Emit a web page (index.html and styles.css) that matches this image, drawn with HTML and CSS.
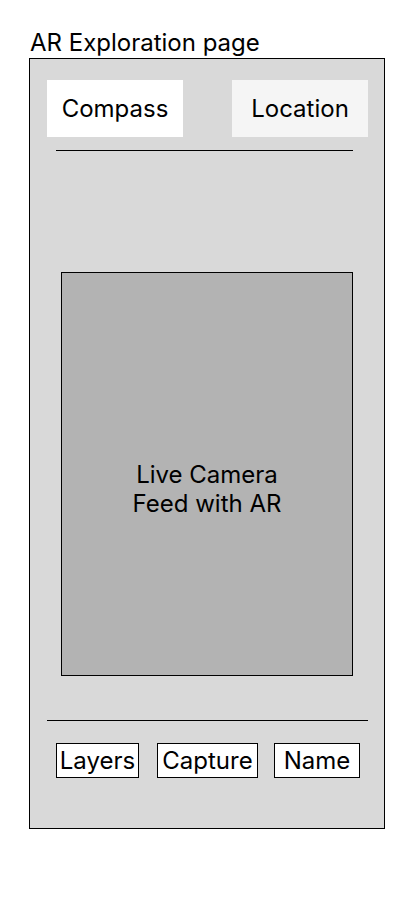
FILE: index.html
```html
<!DOCTYPE html>
<html>
<head>
<meta charset="utf-8">
<link rel="stylesheet" href="styles.css">
</head>
<body>
<div class="title">AR Exploration page</div>
<div class="frame">
  <div class="top-row">
    <div class="top-btn compass">Compass</div>
    <div class="top-btn location">Location</div>
  </div>
  <div class="line top-line"></div>
  <div class="camera">Live Camera<br>Feed with AR</div>
  <div class="line bottom-line"></div>
  <div class="bottom-row">
    <div class="bbtn layers">Layers</div>
    <div class="bbtn capture">Capture</div>
    <div class="bbtn name">Name</div>
  </div>
</div>
</body>
</html>
```
FILE: styles.css
```css
* { box-sizing: border-box; }
body {
  margin: 0;
  background: #fff;
  font-family: Inter, "Noto Sans", sans-serif;
  color: #000;
}
.title {
  font-size: 24px;
  line-height: 29px;
  padding: 28px 0 0 30px;
  height: 58px;
}
.frame {
  margin-left: 29px;
  width: 356px;
  height: 771px;
  border: 1px solid #000;
  background: #d9d9d9;
  padding: 21px 16px 0 17px;
}
.top-row {
  display: flex;
  justify-content: space-between;
}
.top-btn {
  width: 136px;
  height: 57px;
  display: flex;
  align-items: center;
  justify-content: center;
  font-size: 24px;
}
.compass { background: #fff; }
.location { background: #f5f5f5; }
.line {
  height: 1px;
  background: #000;
}
.top-line {
  margin: 13px 0 0 9px;
  width: 297px;
}
.camera {
  margin: 121px 0 0 14px;
  width: 292px;
  height: 404px;
  border: 1px solid #000;
  background: #b3b3b3;
  display: flex;
  align-items: center;
  justify-content: center;
  text-align: center;
  font-size: 24px;
  line-height: 29px;
  padding-top: 30px;
}
.bottom-line {
  margin: 44px 0 0 0;
  width: 321px;
}
.bottom-row {
  display: flex;
  margin: 22px 0 0 9px;
}
.bbtn {
  height: 35px;
  border: 1px solid #000;
  background: #fff;
  font-size: 24px;
  display: flex;
  align-items: center;
  justify-content: center;
}
.layers { width: 83px; }
.capture { width: 101px; margin-left: 18px; }
.name { width: 86px; margin-left: 16px; }
```
